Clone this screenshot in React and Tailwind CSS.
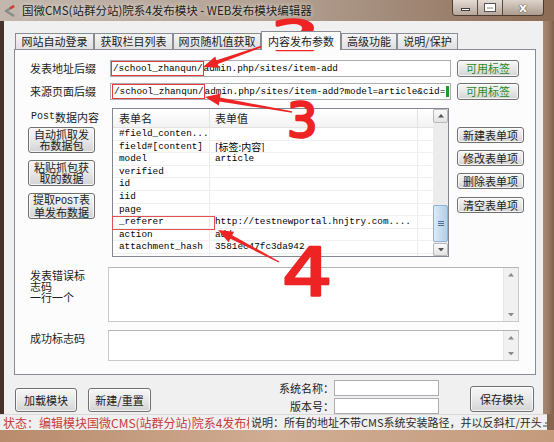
import React from "react";

const CJK = "font-['Noto_Sans_CJK_SC','Noto_Sans',sans-serif]";
const MONO = "font-['Liberation_Mono','DejaVu_Sans_Mono',monospace]";

function Btn({ className = "", children }) {
  return (
    <div
      className={`flex items-center justify-center rounded-[3px] border border-[#707070] bg-gradient-to-b from-[#f6f6f6] via-[#e8e8e8] to-[#d3d3d3] shadow-[inset_0_0_0_1px_rgba(255,255,255,0.75)] ${className}`}
    >
      {children}
    </div>
  );
}

function Tab({ w, active, children }) {
  if (active) {
    return (
      <div
        className={`relative top-[1px] z-10 flex h-[19px] items-center justify-center border border-b-0 border-[#898c95] bg-[#fcfcfc] leading-[16px] ${w}`}
      >
        {children}
      </div>
    );
  }
  return (
    <div
      className={`flex h-[16px] items-center justify-center border border-b-0 border-[#898c95] bg-gradient-to-b from-[#f4f4f4] to-[#e0e0e0] leading-[15px] ${w}`}
    >
      {children}
    </div>
  );
}

// small scroll arrow triangles
function Tri({ up, color = "#4d4d4d", size = 3 }) {
  const s = size;
  return (
    <svg width={s * 2 + 1} height={s + 1} viewBox={`0 0 ${s * 2 + 1} ${s + 1}`}>
      {up ? (
        <polygon points={`0,${s + 1} ${s + 0.5},0 ${s * 2 + 1},${s + 1}`} fill={color} />
      ) : (
        <polygon points={`0,0 ${s * 2 + 1},0 ${s + 0.5},${s + 1}`} fill={color} />
      )}
    </svg>
  );
}

function TextArea({ h }) {
  return (
    <div className={`flex w-[411px] justify-end border border-[#c9c9c9] border-t-[#b5b5b5] bg-white ${h}`}>
      <div className="flex w-[15px] flex-col items-center justify-between border-l border-[#e6e6e6] bg-[#f1f1f1] py-[5px]">
        <Tri up color="#8a8a8a" size={2.5} />
        <Tri color="#8a8a8a" size={2.5} />
      </div>
    </div>
  );
}

const rows = [
  ["#field_conten...", ""],
  ["field#[content]", "[标签:内容]"],
  ["model", "article"],
  ["verified", ""],
  ["id", ""],
  ["iid", ""],
  ["page", ""],
  ["_referer", "http://testnewportal.hnjtry.com...."],
  ["action", "add"],
  ["attachment_hash", "3581ec47fc3da942"],
];

function arrowPoints(x1, y1, x2, y2, head = 15, hw = 6, w0 = 0.7, w1 = 2.0) {
  const dx = x2 - x1;
  const dy = y2 - y1;
  const L = Math.hypot(dx, dy);
  const ux = dx / L;
  const uy = dy / L;
  const nx = -uy;
  const ny = ux;
  const bx = x2 - ux * head;
  const by = y2 - uy * head;
  const pts = [
    [x1 + nx * w0, y1 + ny * w0],
    [bx + nx * w1, by + ny * w1],
    [bx + nx * hw, by + ny * hw],
    [x2, y2],
    [bx - nx * hw, by - ny * hw],
    [bx - nx * w1, by - ny * w1],
    [x1 - nx * w0, y1 - ny * w0],
  ];
  return pts.map((p) => p.map((v) => v.toFixed(1)).join(",")).join(" ");
}

function Markup() {
  const red = "#ee2424";
  return (
    <svg className="pointer-events-none absolute left-0 top-0" width="554" height="442" viewBox="0 0 554 442">
      <rect x="112.5" y="216.5" width="102" height="13" fill="none" stroke="#e05050" strokeWidth="1" />
      <polygon points={arrowPoints(266, 45, 203, 67)} fill={red} />
      <polygon points={arrowPoints(292, 112, 205, 97)} fill={red} />
      <polygon points={arrowPoints(279, 262, 218, 230)} fill={red} />
      <text
        transform="translate(272,50) scale(1.7,0.92)"
        fontFamily="DejaVu Sans"
        fontSize="44"
        fill={red}
        stroke={red}
        strokeWidth="2.6"
        strokeLinejoin="round"
      >
        2
      </text>
      <text
        transform="translate(287,137)"
        fontFamily="DejaVu Sans"
        fontSize="48"
        fill={red}
        stroke={red}
        strokeWidth="2.6"
        strokeLinejoin="round"
      >
        3
      </text>
      <text
        transform="translate(282,295) scale(1.2,1)"
        fontFamily="DejaVu Sans"
        fontSize="66"
        fill={red}
        stroke={red}
        strokeWidth="2.4"
        strokeLinejoin="round"
      >
        4
      </text>
    </svg>
  );
}

export default function App() {
  return (
    <div className={`relative h-[442px] w-[554px] overflow-hidden bg-[#9b7c66] text-[11px] text-[#1b1b1b] ${CJK}`}>
      {/* title bar */}
      <div className="flex h-[21px] items-start bg-gradient-to-r from-[#c3b7ad] via-[#b3a193] to-[#8c6c55]">
        <svg className="ml-[3px] mt-[5px]" width="13" height="12" viewBox="0 0 13 12">
          <path d="M11 1 L3 6 L11 11" fill="none" stroke="#8a8a8a" strokeWidth="2.4" strokeLinejoin="round" />
          <path d="M11 1 L7 3.5" stroke="#d23b2b" strokeWidth="2.4" />
        </svg>
        <span className="ml-[6px] mt-[1px] text-[11.5px] leading-[18px] text-[#231c17] [text-shadow:0_0_5px_rgba(255,255,255,0.85)]">
          国微CMS(站群分站)院系4发布模块 - WEB发布模块编辑器
        </span>
        <div className="ml-auto mr-[10px] flex h-[16px] overflow-hidden rounded-b-[4px] border border-t-0 border-[#4a3a30]">
          <div className="flex w-[25px] items-end justify-center border-r border-[#5a4a3e] bg-gradient-to-b from-[#e4dcd5] to-[#b6a79b] pb-[4px]">
            <div className="h-[3px] w-[9px] border border-[#3c3c3c] bg-white" />
          </div>
          <div className="flex w-[25px] items-center justify-center border-r border-[#5a4a3e] bg-gradient-to-b from-[#e4dcd5] to-[#b6a79b]">
            <div className="h-[7px] w-[10px] border-[2px] border-t-[3px] border-white outline outline-1 outline-[#555]" />
          </div>
          <div className="flex w-[40px] items-center justify-center bg-gradient-to-b from-[#ddd3cb] to-[#ad9c8f]">
            <span className="font-['DejaVu_Sans',sans-serif] text-[13px] font-bold leading-[14px] text-white [text-shadow:0_0_1px_#333,0_0_1px_#333]">x</span>
          </div>
        </div>
      </div>

      {/* frame + client */}
      <div className="flex h-[393px]">
        <div className="w-[4px] bg-[#45322a]" />
        <div className="flex w-[539px] flex-col bg-[#f0f0f0]">
          {/* tabs */}
          <div className="ml-[11px] mt-[10px] flex h-[18px] items-end">
            <Tab w="w-[79px]">网站自动登录</Tab>
            <Tab w="w-[79px]">获取栏目列表</Tab>
            <Tab w="w-[88px]">网页随机值获取</Tab>
            <Tab w="w-[80px]" active>
              内容发布参数
            </Tab>
            <Tab w="w-[56px]">高级功能</Tab>
            <Tab w="w-[61px]">说明/保护</Tab>
          </div>

          {/* tab page */}
          <div className="ml-[10px] h-[326px] w-[522px] border border-[#898c95] bg-[#fcfcfc] pl-[14px] pt-[10px]">
            {/* url rows */}
            <div className="flex h-[17px] items-center">
              <div className="w-[81px] pl-[1px] leading-[17px]">发表地址后缀</div>
              <div className={`flex h-[17px] w-[341px] items-center overflow-hidden whitespace-nowrap border border-[#abadb3] bg-white text-[9.33px] text-black ${MONO}`}>
                <span className="inline-block h-[15px] border border-[#e23c3c] pl-[1px] leading-[13px]">/school_zhanqun/</span>
                <span className="leading-[15px]">admin.php/sites/item-add</span>
              </div>
              <Btn className="ml-[6px] h-[17px] w-[62px] border-[#9a9a9a] text-[#2a8a2a]">可用标签</Btn>
            </div>
            <div className="mt-[6px] flex h-[17px] items-center">
              <div className="w-[81px] pl-[1px] leading-[17px]">来源页面后缀</div>
              <div className={`flex h-[17px] w-[341px] items-center overflow-hidden whitespace-nowrap border border-[#abadb3] bg-white text-[9.33px] text-black ${MONO}`}>
                <span className="ml-[1px] inline-block h-[15px] border border-[#e23c3c] pl-[1px] leading-[13px]">/school_zhanqun/</span>
                <span className="leading-[15px]">admin.php/sites/item-add?model=article&amp;cid=</span>
                <span className="ml-[1px] inline-block h-[11px] w-[3px] shrink-0 bg-[#1d9a2a]" />
              </div>
              <Btn className="ml-[6px] h-[17px] w-[62px] border-[#9a9a9a] text-[#2a8a2a]">可用标签</Btn>
            </div>

            {/* post data section */}
            <div className="mt-[8px] flex">
              <div className="flex w-[83px] flex-col">
                <div className="flex h-[18px] items-center pl-[2px] leading-[12px]">
                  <span className={`text-[10px] ${MONO}`}>Post</span>
                  <span>数据内容</span>
                </div>
                <Btn className="-ml-[1px] mt-[1px] h-[26px] w-[67px] flex-col leading-[11px]">
                  <span>自动抓取发</span>
                  <span>布数据包</span>
                </Btn>
                <Btn className="-ml-[1px] mt-[7px] h-[26px] w-[67px] flex-col leading-[11px]">
                  <span>粘贴抓包获</span>
                  <span>取的数据</span>
                </Btn>
                <Btn className="-ml-[1px] mt-[7px] h-[26px] w-[67px] flex-col leading-[11px]">
                  <span>
                    提取<span className={`text-[10px] ${MONO}`}>POST</span>表
                  </span>
                  <span>单发布数据</span>
                </Btn>
              </div>

              {/* form item table */}
              <div className="flex h-[149px] w-[337px] border border-[#828790] bg-white">
                <div className="flex w-[320px] flex-col overflow-hidden">
                  <div className="flex h-[19px] shrink-0 border-b border-[#e3e3e3] bg-gradient-to-b from-white to-[#f3f3f3] leading-[18px]">
                    <div className="w-[97px] border-r border-[#e3e3e3] pl-[6px]">表单名</div>
                    <div className="w-[208px] border-r border-[#e3e3e3] pl-[5px]">表单值</div>
                    <div className="flex-1" />
                  </div>
                  {rows.map(([k, v]) => (
                    <div key={k} className={`flex h-[12.6px] shrink-0 border-b border-[#f0f0f0] text-[9.33px] leading-[12px] text-black ${MONO}`}>
                      <div className="w-[97px] overflow-hidden whitespace-nowrap border-r border-[#ececec] pl-[6px]">{k}</div>
                      <div className="flex w-[208px] items-center overflow-hidden whitespace-nowrap border-r border-[#ececec] pl-[5px]">
                        {v.startsWith("[") ? <span className={`text-[10px] leading-[11px] ${CJK}`}>{v}</span> : v}
                      </div>
                      <div className="flex-1" />
                    </div>
                  ))}
                  <div className="flex flex-1">
                    <div className="w-[97px] border-r border-[#ececec]" />
                    <div className="w-[208px] border-r border-[#ececec]" />
                  </div>
                </div>
                {/* vertical scrollbar */}
                <div className="flex w-[15px] flex-col bg-[#ececec]">
                  <div className="flex h-[14px] items-center justify-center rounded-[2px] border border-[#b9b9b9] bg-gradient-to-b from-[#fafafa] to-[#e3e3e3]">
                    <Tri up color="#555" size={2.5} />
                  </div>
                  <div className="h-[82px]" />
                  <div className="flex h-[37px] flex-col items-center justify-center gap-[1px] rounded-[2px] border border-[#8fb3d4] bg-gradient-to-r from-[#dcebf8] via-[#c6dcf0] to-[#b2cfe9]">
                    <div className="h-px w-[6px] bg-[#4e6f8f]" />
                    <div className="h-px w-[6px] bg-[#4e6f8f]" />
                    <div className="h-px w-[6px] bg-[#4e6f8f]" />
                  </div>
                  <div className="h-[1px]" />
                  <div className="flex h-[13px] items-center justify-center rounded-[2px] border border-[#b9b9b9] bg-gradient-to-b from-[#fafafa] to-[#e3e3e3]">
                    <Tri color="#555" size={2.5} />
                  </div>
                </div>
              </div>

              <div className="ml-[8px] flex flex-col gap-[7px] pt-[19px]">
                <Btn className="h-[16px] w-[67px]">新建表单项</Btn>
                <Btn className="h-[16px] w-[67px]">修改表单项</Btn>
                <Btn className="h-[16px] w-[67px]">删除表单项</Btn>
                <Btn className="mt-[1px] h-[16px] w-[67px]">清空表单项</Btn>
              </div>
            </div>

            {/* error / success codes */}
            <div className="mt-[10px] flex">
              <div className="w-[79px] pl-[1px] pt-[3px] leading-[11px]">
                发表错误标
                <br />
                志码
                <br />
                一行一个
              </div>
              <TextArea h="h-[55px]" />
            </div>
            <div className="mt-[8px] flex">
              <div className="w-[79px] pl-[1px] pt-[2px] leading-[12px]">成功标志码</div>
              <TextArea h="h-[31px]" />
            </div>
          </div>

          {/* bottom controls */}
          <div className="flex h-[39px]">
            <Btn className="ml-[11px] mt-[13px] h-[24px] w-[62px]">加载模块</Btn>
            <Btn className="ml-[11px] mt-[13px] h-[24px] w-[63px]">新建/重置</Btn>
            <div className="mt-[5px] flex w-[183px] flex-col items-end gap-[2px] leading-[16px]">
              <span className="h-[16px]">系统名称：</span>
              <span className="h-[16px]">版本号：</span>
            </div>
            <div className="mt-[5px] flex flex-col gap-[2px]">
              <div className="h-[16px] w-[105px] border border-[#abadb3] bg-white" />
              <div className="h-[16px] w-[105px] border border-[#abadb3] bg-white" />
            </div>
            <Btn className="ml-[31px] mt-[11px] h-[26px] w-[64px]">保存模块</Btn>
          </div>
        </div>
        <div className="flex-1 bg-gradient-to-r from-[#a88a74] via-[#9a7a63] to-[#7e5f4a]" />
      </div>

      {/* status bar */}
      <div className="flex h-[16px]">
        <div className="flex w-[547px] items-center border-t border-[#d9d9d9] bg-[#f0f0f0] leading-[15px]">
          <div className="w-[249px] shrink-0 overflow-hidden whitespace-nowrap pl-[3px] text-[12px] text-[#c43c3c]">
            状态：编辑模块国微CMS(站群分站)院系4发布模块
          </div>
          <div className="flex-1 whitespace-nowrap pl-[2px] text-[#2a2a2a]">
            说明：所有的地址不带CMS系统安装路径，并以反斜杠/开头
          </div>
          <div className="mr-[2px] mt-[4px] grid grid-cols-3 gap-[1px]">
            <span className="h-[2px] w-[2px]" />
            <span className="h-[2px] w-[2px]" />
            <span className="h-[2px] w-[2px] bg-[#9a9a9a]" />
            <span className="h-[2px] w-[2px]" />
            <span className="h-[2px] w-[2px] bg-[#9a9a9a]" />
            <span className="h-[2px] w-[2px] bg-[#9a9a9a]" />
          </div>
        </div>
        <div className="flex-1 bg-[#86664f]" />
      </div>
      <div className="h-[12px] bg-gradient-to-r from-[#b88b6c] via-[#d0ad93] to-[#c49a7c]" />

      <Markup />
    </div>
  );
}
